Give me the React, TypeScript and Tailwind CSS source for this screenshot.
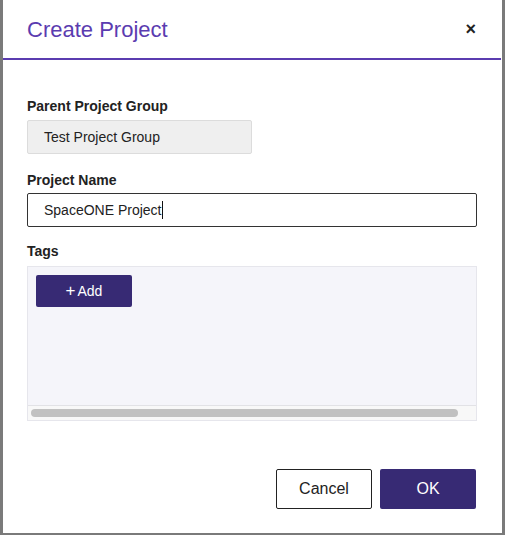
function Label({ children, className = '' }: { children: React.ReactNode; className?: string }) {
    return (
        <div className={`h-4 leading-4 text-[14px] font-bold text-[#222] ${className}`}>{children}</div>
    );
}

export default function App() {
    return (
        <div
            className="w-[505px] h-[535px] bg-[#7a7a7a] pl-[3px] pr-[3px] pb-[2px]"
            style={{ fontFamily: '"Liberation Sans", Arial, sans-serif' }}
        >
            <div className="h-full bg-white flex flex-col">
                <div className="h-[58px] flex items-center justify-between px-[24px] pr-[26px]">
                    <h2 className="text-[22px] text-[#5b3cb0] pt-[1px]">Create Project</h2>
                    <button type="button" className="text-[#222] text-[18px] font-bold leading-none">
                        ×
                    </button>
                </div>
                <div className="h-[2px] bg-[#5b3cb0] mr-[1px]" />

                <div className="flex-1 flex flex-col px-[24px] pt-[38px]">
                    <Label>Parent Project Group</Label>
                    <div className="mt-[6px] w-[225px] h-[34px] flex items-center px-[16px] bg-[#efefef] border border-[#dcdcdc] rounded-[2px] text-[14px] text-[#222]">
                        Test Project Group
                    </div>

                    <Label className="mt-[18px]">Project Name</Label>
                    <div className="mt-[5px] w-[450px] h-[34px] flex items-center px-[16px] bg-white border border-[#333] rounded-[2px] text-[14px] text-[#222]">
                        SpaceONE Project
                        <span className="w-px h-[18px] bg-[#111]" />
                    </div>

                    <Label className="mt-[16px]">Tags</Label>
                    <div className="mt-[7px] w-[450px] h-[155px] flex flex-col bg-[#f5f5fa] border border-[#e6e6ec]">
                        <div className="flex-1 px-[8px] pt-[8px]">
                            <button
                                type="button"
                                className="w-[96px] h-[32px] flex items-center justify-center gap-[2px] bg-[#372a74] text-white text-[14px] rounded-[2px]"
                            >
                                <span className="text-[17px] leading-none font-light -mt-[1px]">+</span>
                                Add
                            </button>
                        </div>
                        <div className="h-[15px] bg-[#f8f8f8] border-t border-[#e2e2e6] flex items-center px-[3px]">
                            <div className="w-[427px] h-[8px] rounded-full bg-[#c1c1c1]" />
                        </div>
                    </div>

                    <div className="flex justify-end gap-[8px] mt-[48px] mr-[2px]">
                        <button
                            type="button"
                            className="w-[96px] h-[40px] bg-white border border-[#222] rounded-[2px] text-[16px] text-[#222]"
                        >
                            Cancel
                        </button>
                        <button
                            type="button"
                            className="w-[96px] h-[40px] bg-[#372a74] rounded-[2px] text-[16px] text-white"
                        >
                            OK
                        </button>
                    </div>
                </div>
            </div>
        </div>
    );
}
